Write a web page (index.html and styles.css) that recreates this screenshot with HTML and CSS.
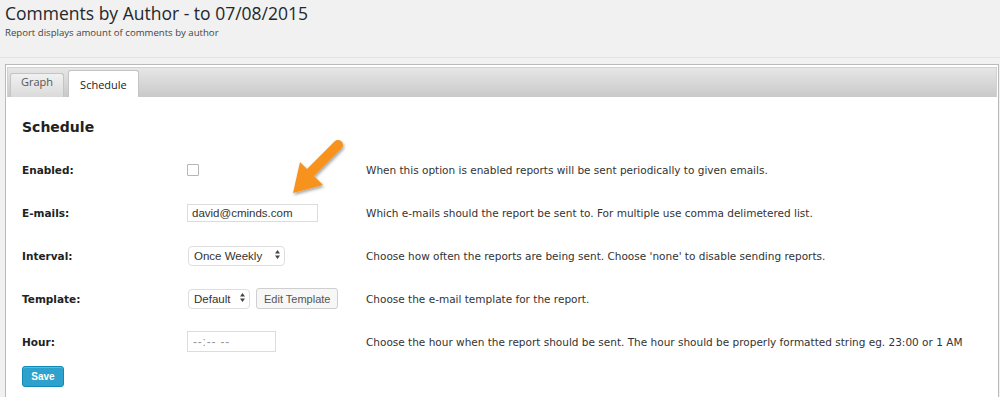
FILE: index.html
```html
<!DOCTYPE html>
<html>
<head>
    <title>Comments by Author</title>
    <link rel="stylesheet" href="styles.css">
</head>
<body>
    <div class="wrap">
        <h1 class="title">Comments by Author - to 07/08/2015</h1>
        <p class="subtitle">Report displays amount of comments by author</p>
        <hr class="sep">

        <div class="tabs">
            <ul class="tab-nav">
                <li class="tab">Graph</li>
                <li class="tab active">Schedule</li>
            </ul>

            <div class="tab-panel">
                <h3 class="panel-title">Schedule</h3>

                <form class="form-grid">
                    <label class="field-label" for="enabled">Enabled:</label>
                    <div class="field"><input type="checkbox" id="enabled" class="checkbox"></div>
                    <div class="desc">When this option is enabled reports will be sent periodically to given emails.</div>

                    <label class="field-label" for="emails">E-mails:</label>
                    <div class="field"><input type="text" id="emails" class="text-input email" value="david@cminds.com"></div>
                    <div class="desc">Which e-mails should the report be sent to. For multiple use comma delimetered list.</div>

                    <label class="field-label" for="interval">Interval:</label>
                    <div class="field">
                        <span class="select-wrap">
                            <select id="interval" class="select interval">
                                <option>Once Weekly</option>
                            </select>
                            <svg class="select-arrows" width="5" height="9" viewBox="0 0 5 9"><path d="M2.5 0L5 3.5H0z M2.5 9L5 5.5H0z" fill="#444"/></svg>
                        </span>
                    </div>
                    <div class="desc">Choose how often the reports are being sent. Choose 'none' to disable sending reports.</div>

                    <label class="field-label" for="template">Template:</label>
                    <div class="field">
                        <span class="select-wrap">
                            <select id="template" class="select template">
                                <option>Default</option>
                            </select>
                            <svg class="select-arrows" width="5" height="9" viewBox="0 0 5 9"><path d="M2.5 0L5 3.5H0z M2.5 9L5 5.5H0z" fill="#444"/></svg>
                        </span>
                        <button type="button" class="btn">Edit Template</button>
                    </div>
                    <div class="desc">Choose the e-mail template for the report.</div>

                    <label class="field-label" for="hour">Hour:</label>
                    <div class="field"><input type="text" id="hour" class="text-input hour" placeholder="--:-- --"></div>
                    <div class="desc">Choose the hour when the report should be sent. The hour should be properly formatted string eg. 23:00 or 1 AM</div>
                </form>

                <button type="button" class="save">Save</button>
            </div>
        </div>
    </div>

    <!-- callout arrow pointing at the e-mails field -->
    <svg class="callout" width="75" height="70" viewBox="0 0 75 70">
        <defs>
            <filter id="shadow" x="-30%" y="-30%" width="160%" height="160%">
                <feDropShadow dx="1" dy="2" stdDeviation="1.5" flood-color="#000" flood-opacity="0.35"/>
            </filter>
        </defs>
        <g filter="url(#shadow)" fill="#f7931e">
            <line x1="58" y1="10" x2="28" y2="40" stroke="#f7931e" stroke-width="10" stroke-linecap="round"/>
            <polygon points="13,58 20,27 43,50"/>
        </g>
    </svg>
</body>
</html>
```

FILE: styles.css
```css
body {
    margin: 0;
    background-color: #f1f1f1;
    font-family: "DejaVu Sans", Verdana, sans-serif;
    color: #333;
    position: relative;
    overflow: hidden;
}
.wrap {
    padding: 0 1px 0 5px;
}
.title {
    margin: 0;
    padding-top: 1px;
    font: 400 17.5px/25px "Open Sans", sans-serif;
    color: #23282d;
}
.subtitle {
    margin: 0;
    font: 400 9.6px/14px "Open Sans", sans-serif;
    color: #444;
}
.sep {
    border: 0;
    border-top: 1px solid #e3e3e3;
    margin: 17px -1px 6px -5px;
}
.tabs {
    border: 1px solid #bababa;
    border-bottom: 0;
    padding: 2px 1px 0 1px;
    background-color: white;
    min-height: 400px;
}
.tab-nav {
    display: flex;
    align-items: flex-end;
    gap: 4px;
    box-sizing: border-box;
    height: 30px;
    margin: 0;
    padding: 0 0 0 2px;
    list-style: none;
    border: 1px solid #d2d2d2;
    border-bottom: 0;
    background: linear-gradient(#e6e6e6, #c9c9c9);
}
.tab {
    height: 23px;
    line-height: 23px;
    padding: 0 10px;
    border: 1px solid #c4c4c4;
    border-bottom: 0;
    border-radius: 3px 3px 0 0;
    background: linear-gradient(#f1f1f1, #dadada);
    font: 400 11px "Open Sans", sans-serif;
    color: #555;
}
.tab.active {
    height: 26px;
    line-height: 27px;
    padding: 0 11px;
    background: white;
    color: #222;
}
.tab-panel {
    padding: 20px 14px 0 15px;
}
.panel-title {
    margin: 0 0 11px;
    font: bold 14px/20px "DejaVu Sans", Verdana, sans-serif;
    color: #222;
}
.form-grid {
    display: grid;
    grid-template-columns: 165px 179px 1fr;
    grid-auto-rows: 43px;
    align-items: center;
    margin: 0;
}
.field-label {
    font-weight: bold;
    font-size: 10.5px;
    color: #222;
}
.field {
    display: flex;
    align-items: center;
    gap: 6px;
}
.desc {
    font-size: 10.5px;
    color: #333;
    white-space: nowrap;
}
.checkbox {
    appearance: none;
    width: 12px;
    height: 12px;
    margin: 0;
    border: 1px solid #b6b6b6;
    border-radius: 1px;
    background: white;
}
.text-input {
    box-sizing: border-box;
    margin: 0;
    padding: 0 4px;
    border: 1px solid #dcdcdc;
    background: white;
    font: 11.5px "Liberation Sans", Arial, sans-serif;
    color: #333;
}
.email {
    width: 131px;
    height: 18px;
}
.hour {
    width: 89px;
    height: 21px;
    padding-left: 5px;
    font-size: 12px;
    letter-spacing: 0.8px;
}
.hour::placeholder {
    color: #999;
}
.select-wrap {
    position: relative;
    display: inline-block;
    margin-left: 1px;
}
.select {
    appearance: none;
    box-sizing: border-box;
    height: 20px;
    margin: 0;
    padding: 0 0 0 5px;
    border: 1px solid #dedede;
    border-radius: 4px;
    background: white;
    font: 11.5px "Liberation Sans", Arial, sans-serif;
    color: #333;
}
.interval {
    width: 97px;
}
.template {
    width: 62px;
}
.select-arrows {
    position: absolute;
    right: 5px;
    top: 5px;
}
.btn {
    box-sizing: border-box;
    height: 21px;
    margin: 0;
    padding: 0 7px;
    border: 1px solid #cfcfcf;
    border-radius: 3px;
    background: #f7f7f7;
    font: 11px "Liberation Sans", Arial, sans-serif;
    color: #555;
}
.save {
    box-sizing: border-box;
    width: 42px;
    height: 21px;
    margin: 3px 0 0 0;
    padding: 0;
    border: 1px solid #0e8ab8;
    border-radius: 3px;
    background-color: #2ea2cc;
    box-shadow: inset 0 1px 0 rgba(120, 200, 230, 0.6);
    font: bold 10px "Liberation Sans", Arial, sans-serif;
    color: white;
}
.callout {
    position: absolute;
    left: 280px;
    top: 135px;
}
```
